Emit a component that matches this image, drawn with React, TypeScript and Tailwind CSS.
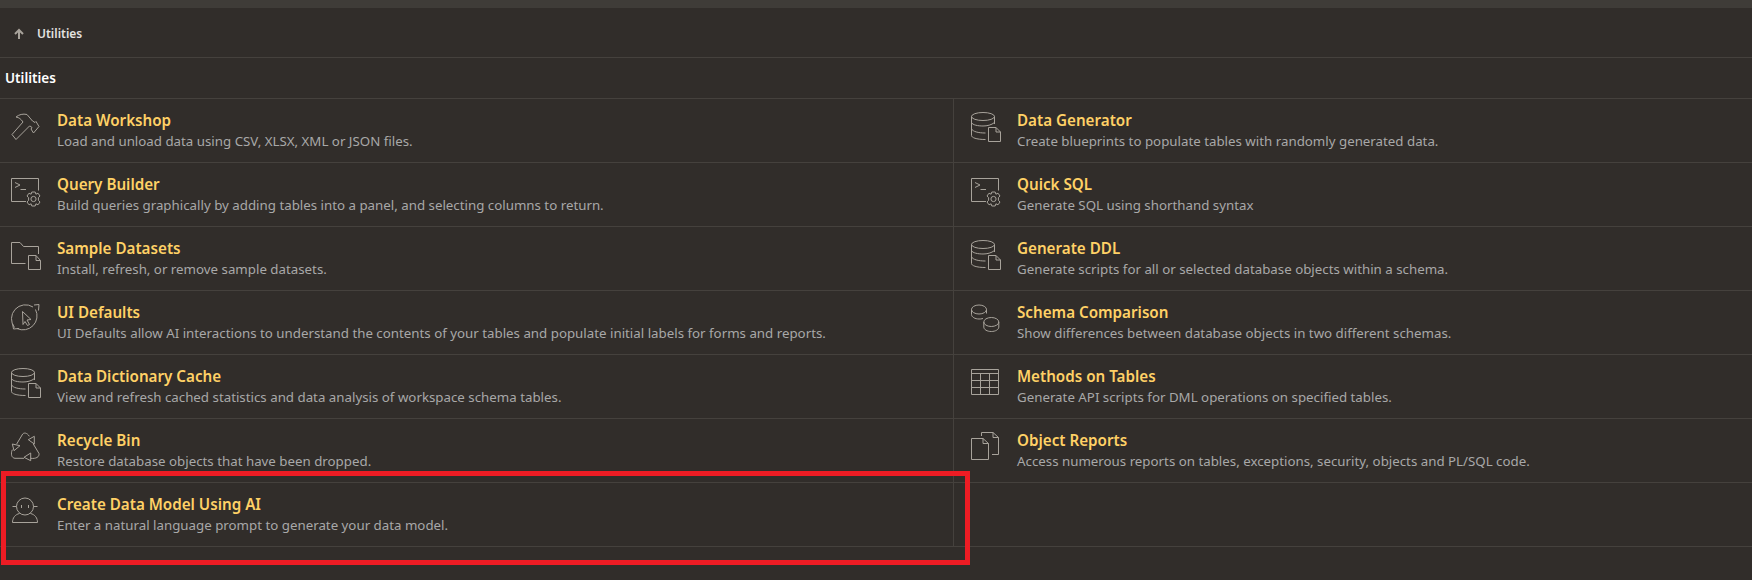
const stroke = { fill: 'none', stroke: '#a8a39b', strokeWidth: 1 };

function Svg({ children }: { children: React.ReactNode }) {
  return (
    <svg width="32" height="32" viewBox="0 0 32 32" className="shrink-0" {...stroke}>
      {children}
    </svg>
  );
}

function HammerIcon() {
  return (
    <Svg>
      <path d="M1 22.5 L12 10 C10 7 8 5.5 5 5 C8 2.5 12 1.5 16 2.5 L21.5 9 L24 10.5 L25 9.5 L28 14.5 L22.5 21 L20 17 L21 15.5 L19 14 L18.5 14 L5 27.5 Z" />
    </Svg>
  );
}

function TerminalIcon() {
  return (
    <Svg>
      <path d="M15 25.5 H0.5 V2.5 H27.5 V14.5" />
      <path d="M4 6.5 L9 9 L4 11.5 M9.5 13.5 H15" />
      <g transform="translate(-1 -1)">
        <circle cx="23.5" cy="24" r="2.6" />
        <path d="M21.8 17 H25.2 L25.9 19.2 L28 18.2 L30 21 L28.4 22.7 V25.3 L30 27 L28 29.8 L25.9 28.8 L25.2 31 H21.8 L21.1 28.8 L19 29.8 L17 27 L18.6 25.3 V22.7 L17 21 L19 18.2 L21.1 19.2 Z" />
      </g>
    </Svg>
  );
}

function FolderIcon() {
  return (
    <Svg>
      <path d="M14.5 23.5 H0.5 V2.5 H9 L12.5 6.5 H27.5 V14" />
      <path d="M17.5 29.5 V15.5 H25 L29.5 20.5 V29.5 Z M25 15.5 V20.5 H29.5" />
    </Svg>
  );
}

function DefaultsIcon() {
  return (
    <Svg>
      <path d="M22 3 A14 14 0 0 0 3.5 23.5 M24.5 5.5 A14 14 0 0 1 6 24.5" />
      <path d="M23 1 L28 0.5 L27.5 6.5 M1.5 19.5 L2.5 25 L8 24.5" />
      <path d="M11.5 7.5 L20 15.5 L16 16 L18.5 20.5 L16.5 21.5 L14 17.5 L12 20.5 Z" />
    </Svg>
  );
}

function DatabaseIcon() {
  return (
    <Svg>
      <ellipse cx="12" cy="4.5" rx="11.5" ry="4" />
      <path d="M0.5 4.5 V23.5 C0.5 25.5 5 27.5 14.5 27.5 M23.5 4.5 V12 M0.5 10.5 C1.5 13 7 14 12 14 C16 14 20.5 13 23.5 10.5 M0.5 17 C2 19.5 7 21 14.5 21" />
      <path d="M17.5 29.5 V15.5 H25 L29.5 20 V29.5 Z M25 15.5 V20 H29.5" />
    </Svg>
  );
}

function RecycleIcon() {
  return (
    <Svg>
      <path d="M5.7 12 L11.7 2 C13 0.5 16 0.5 18.3 4.3 M22.3 12 L28 21.5 C28.5 25 25 27 19.7 26.3 M13 26.3 H4 C0.5 26 -0.5 22 1.3 17.7" />
      <path d="M23.3 4.3 L17.3 7.7 L23.3 12 Z M1.3 12 L9 13.7 L3 18.7 Z M19.7 21 L13 25.3 L19.7 28.7 Z" />
    </Svg>
  );
}

function RobotIcon() {
  return (
    <Svg>
      <circle cx="14" cy="10.5" r="8.5" />
      <path d="M1.5 10.5 H5.5 M22.5 10.5 H26.5 M10.5 9 V12 M17.5 9 V12" />
      <path d="M8.5 17.5 C4 18.5 1.5 22 1.5 26.5 H26.5 C26.5 22 24 18.5 19.5 17.5" />
    </Svg>
  );
}

function CoinsIcon() {
  return (
    <Svg>
      <ellipse cx="8" cy="5.5" rx="7.5" ry="4.5" />
      <path d="M0.5 5.5 V10.5 C0.5 13 4 15 8 15 C9 15 10.5 15 12 14.5 M15.5 5.5 V9.5" />
      <ellipse cx="20.3" cy="18" rx="7.5" ry="4.5" />
      <path d="M12.8 18 V23 C12.8 25.5 16 27.5 20.3 27.5 C24.5 27.5 27.8 25.5 27.8 23 V18" />
    </Svg>
  );
}

function TableIcon() {
  return (
    <Svg>
      <path d="M0.5 1.5 H27.5 V26.5 H0.5 Z M0.5 5.5 H27.5 M0.5 12.5 H27.5 M0.5 19.5 H27.5 M9.5 5.5 V26.5 M18.5 5.5 V26.5" />
    </Svg>
  );
}

function CopyIcon() {
  return (
    <Svg>
      <path d="M10.5 4 V0.5 H22 L27.5 5.5 V22.5 H21" />
      <path d="M22 0.5 V5.5 H27.5" />
      <path d="M0.5 27.5 V6.5 H12 L17.5 11.5 V27.5 Z M12 6.5 V11.5 H17.5" />
    </Svg>
  );
}

const rows = [
  [
    { icon: <HammerIcon />, title: 'Data Workshop', desc: 'Load and unload data using CSV, XLSX, XML or JSON files.' },
    { icon: <DatabaseIcon />, title: 'Data Generator', desc: 'Create blueprints to populate tables with randomly generated data.' },
  ],
  [
    { icon: <TerminalIcon />, title: 'Query Builder', desc: 'Build queries graphically by adding tables into a panel, and selecting columns to return.' },
    { icon: <TerminalIcon />, title: 'Quick SQL', desc: 'Generate SQL using shorthand syntax' },
  ],
  [
    { icon: <FolderIcon />, title: 'Sample Datasets', desc: 'Install, refresh, or remove sample datasets.' },
    { icon: <DatabaseIcon />, title: 'Generate DDL', desc: 'Generate scripts for all or selected database objects within a schema.' },
  ],
  [
    { icon: <DefaultsIcon />, title: 'UI Defaults', desc: 'UI Defaults allow AI interactions to understand the contents of your tables and populate initial labels for forms and reports.' },
    { icon: <CoinsIcon />, title: 'Schema Comparison', desc: 'Show differences between database objects in two different schemas.' },
  ],
  [
    { icon: <DatabaseIcon />, title: 'Data Dictionary Cache', desc: 'View and refresh cached statistics and data analysis of workspace schema tables.' },
    { icon: <TableIcon />, title: 'Methods on Tables', desc: 'Generate API scripts for DML operations on specified tables.' },
  ],
  [
    { icon: <RecycleIcon />, title: 'Recycle Bin', desc: 'Restore database objects that have been dropped.' },
    { icon: <CopyIcon />, title: 'Object Reports', desc: 'Access numerous reports on tables, exceptions, security, objects and PL/SQL code.' },
  ],
  [
    { icon: <RobotIcon />, title: 'Create Data Model Using AI', desc: 'Enter a natural language prompt to generate your data model.' },
    null,
  ],
];

type Item = { icon: React.ReactNode; title: string; desc: string } | null;

function Cell({ item, first }: { item: Item; first: boolean }) {
  return (
    <div className={`flex h-16 items-start border-b border-[#45413d] pt-[11px] ${first ? 'w-[954px] border-r pl-[11px]' : 'flex-1 pl-[17px]'}`}>
      {item && (
        <>
          <div className="mt-[2px] w-[46px] shrink-0">{item.icon}</div>
          <div>
            <div className="text-[15.2px] leading-[21px] font-semibold text-[#ffd166]">{item.title}</div>
            <div className="text-[13.3px] leading-[20px] text-[#a8a8a8]">{item.desc}</div>
          </div>
        </>
      )}
    </div>
  );
}

export default function App() {
  return (
    <div className="relative h-[580px] w-[1752px] overflow-hidden bg-[#312d2a]" style={{ fontFamily: "'Noto Sans', sans-serif" }}>
      <div className="h-2 bg-[#3f3c38]" />
      <div className="flex h-[50px] items-center gap-[12px] border-b border-[#45413d] pt-[2px] pl-[13px]">
        <svg width="12" height="12" viewBox="0 0 12 12" fill="none" stroke="#a8a39b" strokeWidth="2">
          <path d="M6 11 V2 M2 6 L6 2 L10 6" />
        </svg>
        <span className="text-[12px] font-semibold text-[#e4e2e0]">Utilities</span>
      </div>
      <div className="flex h-[41px] items-center border-b border-[#45413d] pl-[5px] text-[13.5px] font-semibold text-white">
        Utilities
      </div>
      {rows.map((row, i) => (
        <div key={i} className="flex">
          <Cell item={row[0]} first />
          <Cell item={row[1]} first={false} />
        </div>
      ))}
      <div className="pointer-events-none absolute top-[471px] left-[1px] h-[94px] w-[969px] border-[5px] border-[#ed1c24]" />
    </div>
  );
}
